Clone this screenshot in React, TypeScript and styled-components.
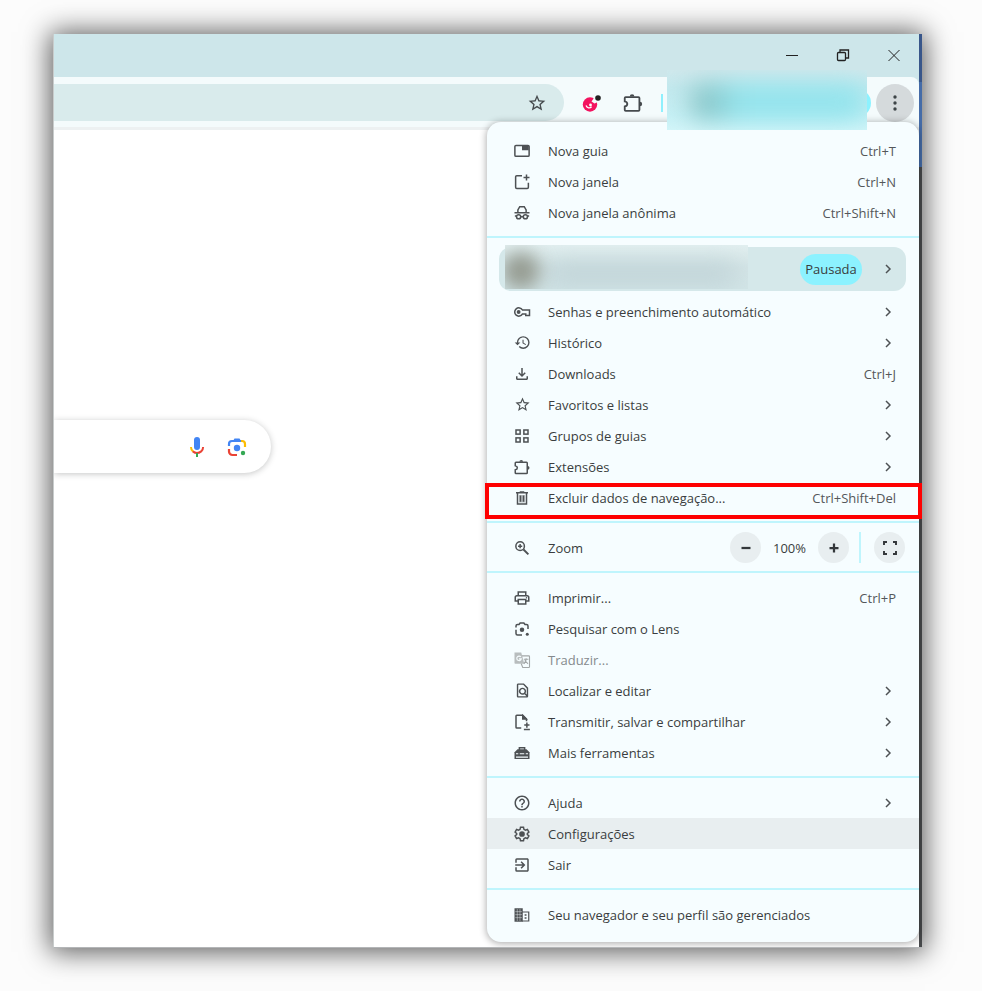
import React from 'react';
import styled, { createGlobalStyle } from 'styled-components';
import {
  MdExitToApp,
  MdHelpOutline,
  MdHistory,
  MdOutlineFileDownload,
  MdOutlineFindInPage,
  MdOutlinePrint,
  MdStarBorder,
} from 'react-icons/md';

const GlobalStyle = createGlobalStyle`
  * { box-sizing: border-box; }
  body {
    margin: 0;
    background: #fcfcfc;
    font-family: "Open Sans", "Noto Sans", sans-serif;
    font-size: 13px;
    color: #3a3d40;
  }
  button, input { font: inherit; color: inherit; border: 0; padding: 0; background: none; }
  svg { display: block; flex: none; }
`;

const Page = styled.div`
  display: flex;
  min-height: 100vh;
  padding: 34px 60px 43px 53px;
`;

const Window = styled.div`
  flex: 1;
  min-width: 0;
  display: flex;
  flex-direction: column;
  overflow: hidden;
  padding-right: 3px;
  border-left: 1px solid #c8cccc;
  border-bottom: 1px solid #b4b6b8;
  background: linear-gradient(#38568a 0 48px, #456ca8 48px 133px, #47494b 133px);
  box-shadow: 0 1px 26px 3px rgba(0, 0, 0, 0.65);
`;

const TitleBar = styled.header`
  height: 43px;
  display: flex;
  align-items: center;
  justify-content: flex-end;
  padding: 0 17px 1px 0;
  gap: 35px;
  background: #cde6ea;
`;

const WindowButton = styled.button`
  width: 16px;
  height: 16px;
  color: #222;
`;

const ToolbarBack = styled.div`
  background: #cde6ea;
`;

const Toolbar = styled.div`
  height: 53px;
  display: flex;
  align-items: center;
  padding: 1px 5px 0 0;
  background: #f4fbfc;
  border-bottom: 3px solid #edf1f2;
  border-top-right-radius: 8px;
`;

const Omnibox = styled.div`
  flex: 1;
  min-width: 0;
  height: 37px;
  display: flex;
  align-items: center;
  padding-right: 17px;
  border-radius: 0 19px 19px 0;
  background: #d9ebec;
`;

const BlankInput = styled.input`
  flex: 1;
  min-width: 0;
  height: 100%;
  outline: 0;
`;

const IconButton = styled.button<{ $left: number }>`
  margin-left: ${(p) => p.$left}px;
  color: #454a4d;
`;

const ToolbarDivider = styled.span`
  width: 2px;
  height: 18px;
  margin: 0 4px 0 17px;
  background: #8ff0fd;
`;

const ProfileChip = styled.button`
  position: relative;
  z-index: 2;
  width: 204px;
  height: 28px;
  border-radius: 14px;
  background: #8cf2ff;
`;

const ChipBlur = styled.span`
  position: absolute;
  left: 0;
  top: -19px;
  width: 200px;
  height: 60px;
  overflow: hidden;
  background: linear-gradient(#cfe8ec, #c3e9ee 30%, #c6f0f5 75%, #d2f5f9);

  &::before {
    content: "";
    position: absolute;
    inset: 15px 0 11px 24px;
    border-radius: 14px;
    background: linear-gradient(90deg, #7fbcbd 0 10px, #8fe3ec 48px);
    filter: blur(13px);
  }
`;

const KebabButton = styled.button`
  width: 38px;
  height: 38px;
  margin-left: 5px;
  display: grid;
  place-items: center;
  border-radius: 50%;
  background: #d5dadc;
  color: #3d4447;
`;

const Body = styled.main`
  flex: 1;
  display: flex;
  background: #fff;
`;

const SearchPane = styled.section`
  flex: 1;
  min-width: 0;
  padding-top: 290px;
`;

const SearchBox = styled.form`
  width: 50%;
  height: 53px;
  display: flex;
  align-items: center;
  gap: 19px;
  padding-right: 23px;
  border-radius: 0 27px 27px 0;
  box-shadow: 0 1px 6px rgba(32, 33, 36, 0.26);
`;

const Menu = styled.nav`
  position: relative;
  width: 432px;
  flex: none;
  align-self: flex-start;
  margin: -8px 0 5px;
  padding: 13px 0 12px;
  border-radius: 14px;
  background: #f6fdff;
  box-shadow: 0 1px 7px 1px rgba(0, 0, 0, 0.3);
`;

const Separator = styled.hr`
  height: 2px;
  margin: 8px 0 9px;
  border: 0;
  background: #bff5fd;
`;

const Row = styled.button<{ $active?: boolean }>`
  position: relative;
  width: 100%;
  height: 31px;
  display: flex;
  align-items: center;
  gap: 17px;
  padding: 0 23px 0 26px;
  text-align: left;
  background: ${(p) => (p.$active ? '#e8eef0' : 'transparent')};

  &:disabled { color: #858a8d; }
`;

const IconSlot = styled.span`
  width: 18px;
  display: grid;
  place-items: center;
  color: #4d5154;
  button:disabled & { color: #a3a7a8; }
`;

const Label = styled.span`
  flex: 1;
  white-space: nowrap;
  line-height: 18px;
  padding-top: 1px;
`;

const Shortcut = styled.span`
  color: #54575a;
  white-space: nowrap;
  line-height: 18px;
  padding-top: 1px;
`;

const Highlight = styled.span`
  position: absolute;
  inset: 1px -3px -6px -2px;
  border: 4px solid #fe0000;
  pointer-events: none;
`;

const ProfileRow = styled.button`
  position: relative;
  width: calc(100% - 25px);
  height: 44px;
  margin: 0 13px 5px 12px;
  display: flex;
  align-items: center;
  justify-content: flex-end;
  gap: 18px;
  padding-right: 10px;
  border-radius: 12px;
  background: #d5e8ea;
`;

const ProfileBlur = styled.span`
  position: absolute;
  left: 6px;
  top: -2px;
  width: 243px;
  height: 44px;
  overflow: hidden;
  background: linear-gradient(#e2eff0, #d3e4e6 50%, #d2e5e7);

  &::before {
    content: "";
    position: absolute;
    inset: 18px 10px 4px 40px;
    border-radius: 12px;
    background: #bfd2d6;
    filter: blur(12px);
  }

  &::after {
    content: "";
    position: absolute;
    left: -3px;
    top: 7px;
    width: 38px;
    height: 38px;
    border-radius: 50%;
    background: #969c92;
    filter: blur(9px);
  }
`;

const Badge = styled.span`
  height: 31px;
  width: 62px;
  line-height: 31px;
  text-align: center;
  border-radius: 16px;
  background: #8cf2ff;
`;

const ZoomRow = styled.div`
  height: 31px;
  display: flex;
  align-items: center;
  padding: 0 14px 0 26px;
`;

const ZoomLabel = styled(Label)`
  margin-left: 17px;
`;

const RoundButton = styled.button`
  width: 31px;
  height: 31px;
  display: grid;
  place-items: center;
  border-radius: 50%;
  background: #e8eef0;
  color: #33373a;
`;

const ZoomValue = styled.output`
  width: 57px;
  text-align: center;
`;

const ZoomDivider = styled.span`
  width: 2px;
  height: 31px;
  margin: 0 13px 0 10px;
  background: #bff5fd;
`;

type IconProps = { size?: number };

const Svg = ({ size = 18, children, w = 2 }: IconProps & { children: React.ReactNode; w?: number }) => (
  <svg width={size} height={size} viewBox="0 0 24 24" fill="none" stroke="currentColor" strokeWidth={w} aria-hidden="true">
    {children}
  </svg>
);

const TabIcon = () => (
  <Svg>
    <rect x="2.500" y="4.500" width="19" height="14.500" rx="1.500" />
    <path d="M12 5h9v6h-9z" fill="currentColor" stroke="none" />
  </Svg>
);
const NewWindowIcon = () => (
  <Svg>
    <path d="M12 3.500H5a1.500 1.500 0 0 0-1.500 1.500v14A1.500 1.500 0 0 0 5 20.500h14a1.500 1.500 0 0 0 1.500-1.500v-6" />
    <path d="M18 2v8M14 6h8" />
  </Svg>
);
const IncognitoIcon = () => (
  <Svg>
    <path d="M2 11.500h20M6.500 11V8L9 3.500h6L17.500 8v3" />
    <circle cx="7.500" cy="17" r="2.800" />
    <circle cx="16.500" cy="17" r="2.800" />
    <path d="M10 17h4M2.500 16h2M19.500 16h2" />
  </Svg>
);
const PasswordIcon = () => (
  <Svg>
    <path d="M12.500 9.200A5.500 5.500 0 1 0 12.500 14.800H16M12 9.200h10v7.500h-5v-3" />
    <circle cx="7.500" cy="12" r="2.600" fill="currentColor" stroke="none" />
  </Svg>
);
const GroupsIcon = () => (
  <Svg>
    {[4, 14.5].map((x) => [4, 14.5].map((y) => <rect key={`${x}-${y}`} x={x} y={y} width="5.500" height="5.500" />))}
  </Svg>
);
const PuzzleIcon = ({ size = 18 }: IconProps) => (
  <Svg size={size}>
    <path d="M4 5.500h14a1 1 0 0 1 1 1v13a1 1 0 0 1-1 1H4a1 1 0 0 1-1-1v-3.700c3.700-.6 3.700-5 0-5.600V6.500a1 1 0 0 1 1-1z" />
    <path d="M8.500 5a2.500 2.500 0 0 1 5 0zM19.500 10.500a2.500 2.500 0 0 1 0 5z" fill="currentColor" stroke="none" />
  </Svg>
);
const TrashIcon = () => (
  <Svg>
    <path d="M4 5h16M9 4h6M6 5v15h12V5M10 8.500v8.500M14 8.500v8.500" />
    <path d="M8 8h8v10H8z" fill="currentColor" stroke="none" opacity=".35" />
  </Svg>
);
const ZoomIcon = () => (
  <Svg>
    <circle cx="9.500" cy="9.500" r="5.700" />
    <path d="M14 14l6.500 6.500" strokeWidth="2.600" />
    <path d="M9.500 6.700v5.600M6.700 9.500h5.600" />
  </Svg>
);
const LensMenuIcon = () => (
  <Svg>
    <path d="M4 10V8a2 2 0 0 1 2-2h2l1.500-2h5L16 6h2a2 2 0 0 1 2 2v4M4 13v5a2 2 0 0 0 2 2h6" />
    <circle cx="12" cy="13" r="3" fill="currentColor" stroke="none" />
    <circle cx="19" cy="19" r="2" fill="currentColor" stroke="none" />
  </Svg>
);
const TranslateIcon = () => (
  <Svg w={1.5}>
    <path d="M2 2h9l4 15H3a1 1 0 0 1-1-1z" fill="currentColor" stroke="none" opacity=".75" />
    <path d="M10.500 8a3 3 0 1 0 .5 2.500H8" stroke="#f6fdff" />
    <path d="M12 6.500h9a1 1 0 0 1 1 1V21a1 1 0 0 1-1 1h-8l-2-5M14.500 11h6M17.500 9.500V11c0 3-1.500 4.500-3 6M16 12c1 2.500 2 3.500 4 5" />
  </Svg>
);
const CastSaveIcon = () => (
  <Svg>
    <path d="M11 20H5a1 1 0 0 1-1-1V4a1 1 0 0 1 1-1h8l5 5v3" />
    <path d="M13 3.500V8h4.500z" fill="currentColor" />
    <path d="M18.500 12.500v7M15 16h7M14.500 22h8" />
  </Svg>
);
const ToolboxIcon = () => (
  <Svg>
    <path d="M8.500 8V5h7v3" />
    <path d="M6 7h12l4 4v9H2v-9z" fill="currentColor" stroke="none" />
    <path d="M4 13h16M4 17.500h16" stroke="#f6fdff" strokeWidth="1.400" />
    <path d="M8 11.500v3.500M16 11.500v3.500" />
  </Svg>
);
const GearIcon = () => (
  <Svg>
    <path d="M10 3h4l.6 2.800 1.900 1.100 2.700-.9 2 3.500-2.100 1.900v1.200l2.100 1.900-2 3.500-2.700-.9-1.900 1.100L14 21h-4l-.6-2.800-1.900-1.100-2.700.9-2-3.500 2.100-1.900v-1.200L2.800 9.500l2-3.500 2.700.9 1.900-1.100z" />
    <circle cx="12" cy="12" r="3.800" fill="currentColor" stroke="none" />
  </Svg>
);
const BuildingIcon = () => (
  <Svg>
    <path d="M2 3h11v18H2z" fill="currentColor" stroke="none" />
    <path d="M5.700 4v16M9.300 4v16M3 7.500h9M3 11.500h9M3 15.500h9" stroke="#f6fdff" strokeWidth=".8" opacity=".7" />
    <path d="M12 8h9v12h-9" strokeWidth="1.600" />
    <path d="M15.500 12h2.500M15.500 16h2.500" />
  </Svg>
);
const Chevron = () => (
  <Svg size={16}>
    <path d="M9 6l6 6-6 6" stroke="#4d5154" strokeWidth="2.200" />
  </Svg>
);
const RedExtensionIcon = () => (
  <svg width="20" height="20" viewBox="0 0 20 20" aria-hidden="true">
    <circle cx="8" cy="11.500" r="7.200" fill="#f3135f" />
    <path d="M4 12.500c1 2.600 3.800 3 5.600 1.300" fill="none" stroke="#fff" strokeWidth="1.300" />
    <circle cx="8.500" cy="12" r="1.400" fill="#fff" />
    <path d="M9.500 8.500l3.500-5 4 5-4.500 2z" fill="#f4fbfc" />
    <circle cx="16" cy="5" r="2.800" fill="#222" />
  </svg>
);
const MicIcon = () => (
  <svg width="20" height="22" viewBox="0 0 20 22" fill="none" strokeWidth="2" aria-hidden="true">
    <rect x="7" y="1" width="6" height="13" rx="3" fill="#4285f4" />
    <path d="M4 11c0 2 .7 3.500 2 4.600" stroke="#fbbc04" />
    <path d="M5.800 15.400c2.600 2 5.800 2 8.400 0 1.200-1 1.900-2.500 1.900-4.400" stroke="#ea4335" />
    <path d="M10 17v4" stroke="#34a853" />
  </svg>
);
const LensIcon = () => (
  <svg width="22" height="22" viewBox="0 0 22 22" fill="none" strokeWidth="2.200" aria-hidden="true">
    <path d="M3 10V8a3 3 0 0 1 3-3h9" stroke="#4285f4" />
    <path d="M7 5l1.500-2.500h5L15 5z" fill="#4285f4" />
    <path d="M15 5h1a3 3 0 0 1 3 3v3" stroke="#fbbc04" />
    <path d="M3 13v2.500a3.500 3.500 0 0 0 3.500 3.500H11" stroke="#ea4335" />
    <circle cx="11" cy="12" r="3.200" fill="#4285f4" />
    <circle cx="17" cy="17" r="2.200" fill="#34a853" />
  </svg>
);

type Item = {
  label: string;
  icon: React.ReactNode;
  shortcut?: string;
  submenu?: boolean;
  active?: boolean;
  disabled?: boolean;
  marked?: boolean;
};

const windowItems: Item[] = [
  { label: 'Nova guia', icon: <TabIcon />, shortcut: 'Ctrl+T' },
  { label: 'Nova janela', icon: <NewWindowIcon />, shortcut: 'Ctrl+N' },
  { label: 'Nova janela anônima', icon: <IncognitoIcon />, shortcut: 'Ctrl+Shift+N' },
];
const dataItems: Item[] = [
  { label: 'Senhas e preenchimento automático', icon: <PasswordIcon />, submenu: true },
  { label: 'Histórico', icon: <MdHistory size={17} />, submenu: true },
  { label: 'Downloads', icon: <MdOutlineFileDownload size={18} />, shortcut: 'Ctrl+J' },
  { label: 'Favoritos e listas', icon: <MdStarBorder size={17} />, submenu: true },
  { label: 'Grupos de guias', icon: <GroupsIcon />, submenu: true },
  { label: 'Extensões', icon: <PuzzleIcon />, submenu: true },
  { label: 'Excluir dados de navegação...', icon: <TrashIcon />, shortcut: 'Ctrl+Shift+Del', marked: true },
];
const pageItems: Item[] = [
  { label: 'Imprimir...', icon: <MdOutlinePrint size={18} />, shortcut: 'Ctrl+P' },
  { label: 'Pesquisar com o Lens', icon: <LensMenuIcon /> },
  { label: 'Traduzir...', icon: <TranslateIcon />, disabled: true },
  { label: 'Localizar e editar', icon: <MdOutlineFindInPage size={17} />, submenu: true },
  { label: 'Transmitir, salvar e compartilhar', icon: <CastSaveIcon />, submenu: true },
  { label: 'Mais ferramentas', icon: <ToolboxIcon />, submenu: true },
];
const appItems: Item[] = [
  { label: 'Ajuda', icon: <MdHelpOutline size={18} />, submenu: true },
  { label: 'Configurações', icon: <GearIcon />, active: true },
  { label: 'Sair', icon: <MdExitToApp size={18} /> },
];
const managedItems: Item[] = [
  { label: 'Seu navegador e seu perfil são gerenciados', icon: <BuildingIcon /> },
];

const MenuItems = ({ items }: { items: Item[] }) => (
  <>
    {items.map((item) => (
      <Row key={item.label} type="button" $active={item.active} disabled={item.disabled}>
        <IconSlot>{item.icon}</IconSlot>
        <Label>{item.label}</Label>
        {item.shortcut && <Shortcut>{item.shortcut}</Shortcut>}
        {item.submenu && <Chevron />}
        {item.marked && <Highlight />}
      </Row>
    ))}
  </>
);

export default function App() {
  return (
    <Page>
      <GlobalStyle />
      <Window>
        <TitleBar>
          <WindowButton type="button" aria-label="Minimizar">
            <svg width="16" height="16" viewBox="0 0 16 16" stroke="currentColor"><path d="M2 8.500h12" /></svg>
          </WindowButton>
          <WindowButton type="button" aria-label="Restaurar">
            <svg width="16" height="16" viewBox="0 0 16 16" fill="none" stroke="currentColor" strokeWidth="1.300">
              <rect x="2.500" y="5.500" width="8" height="8" rx="1" />
              <path d="M5 5.500V3h8.500v8H11" />
            </svg>
          </WindowButton>
          <WindowButton type="button" aria-label="Fechar">
            <svg width="16" height="16" viewBox="0 0 16 16" stroke="currentColor"><path d="M2.500 3l11 11M13.500 3l-11 11" /></svg>
          </WindowButton>
        </TitleBar>
        <ToolbarBack>
          <Toolbar>
            <Omnibox>
              <BlankInput type="text" aria-label="Barra de endereço" />
              <IconButton type="button" aria-label="Favoritar" $left={0}><MdStarBorder size={20} /></IconButton>
            </Omnibox>
            <IconButton type="button" aria-label="Extensão ativa" $left={18}><RedExtensionIcon /></IconButton>
            <IconButton type="button" aria-label="Extensões" $left={20}><PuzzleIcon size={22} /></IconButton>
            <ToolbarDivider />
            <ProfileChip type="button" aria-label="Perfil"><ChipBlur /></ProfileChip>
            <KebabButton type="button" aria-label="Menu">
              <svg width="20" height="20" viewBox="0 0 20 20" fill="currentColor">
                <circle cx="10" cy="4" r="1.700" /><circle cx="10" cy="10" r="1.700" /><circle cx="10" cy="16" r="1.700" />
              </svg>
            </KebabButton>
          </Toolbar>
        </ToolbarBack>
        <Body>
          <SearchPane>
            <SearchBox>
              <BlankInput type="text" aria-label="Pesquisar" />
              <IconButton type="button" aria-label="Pesquisa por voz" $left={0}><MicIcon /></IconButton>
              <IconButton type="button" aria-label="Pesquisa por imagem" $left={0}><LensIcon /></IconButton>
            </SearchBox>
          </SearchPane>
          <Menu aria-label="Menu do navegador">
            <MenuItems items={windowItems} />
            <Separator />
            <ProfileRow type="button" aria-label="Perfil: pausada">
              <ProfileBlur />
              <Badge>Pausada</Badge>
              <Chevron />
            </ProfileRow>
            <MenuItems items={dataItems} />
            <Separator />
            <ZoomRow>
              <IconSlot><ZoomIcon /></IconSlot>
              <ZoomLabel>Zoom</ZoomLabel>
              <RoundButton type="button" aria-label="Diminuir zoom">
                <Svg><path d="M6 12h12" strokeWidth="3" /></Svg>
              </RoundButton>
              <ZoomValue>100%</ZoomValue>
              <RoundButton type="button" aria-label="Aumentar zoom">
                <Svg><path d="M6 12h12M12 6v12" strokeWidth="3" /></Svg>
              </RoundButton>
              <ZoomDivider />
              <RoundButton type="button" aria-label="Tela cheia">
                <Svg><path d="M4 8V4h4M16 4h4v4M20 16v4h-4M8 20H4v-4" strokeWidth="2.600" /></Svg>
              </RoundButton>
            </ZoomRow>
            <Separator />
            <MenuItems items={pageItems} />
            <Separator />
            <MenuItems items={appItems} />
            <Separator />
            <MenuItems items={managedItems} />
          </Menu>
        </Body>
      </Window>
    </Page>
  );
}
